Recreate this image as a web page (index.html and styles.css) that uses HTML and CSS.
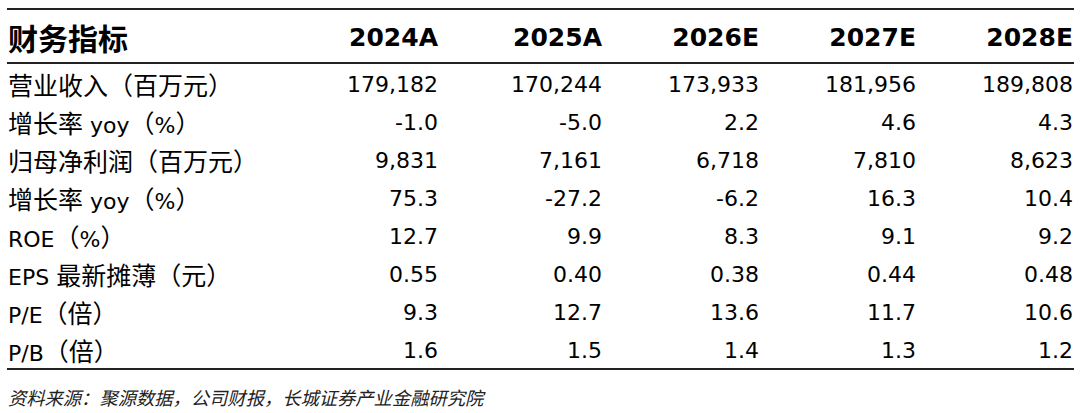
FILE: index.html
```html
<!DOCTYPE html>
<html lang="zh-CN">
<head>
<meta charset="utf-8">
<title>财务指标</title>
<link rel="stylesheet" href="styles.css">
</head>
<body>
<table class="fin">
  <colgroup>
    <col class="c-label">
    <col class="c1">
    <col class="c2">
    <col class="c3">
    <col class="c4">
    <col class="c5">
  </colgroup>
  <thead>
    <tr>
      <th class="label"><span class="cn">财务指标</span></th>
      <th>2024A</th>
      <th>2025A</th>
      <th>2026E</th>
      <th>2027E</th>
      <th>2028E</th>
    </tr>
  </thead>
  <tbody>
    <tr><td class="label"><span class="cn">营业收入（百万元）</span></td><td>179,182</td><td>170,244</td><td>173,933</td><td>181,956</td><td>189,808</td></tr>
    <tr><td class="label"><span class="cn">增长率</span> yoy<span class="cn">（</span>%<span class="cn">）</span></td><td>-1.0</td><td>-5.0</td><td>2.2</td><td>4.6</td><td>4.3</td></tr>
    <tr><td class="label"><span class="cn">归母净利润（百万元）</span></td><td>9,831</td><td>7,161</td><td>6,718</td><td>7,810</td><td>8,623</td></tr>
    <tr><td class="label"><span class="cn">增长率</span> yoy<span class="cn">（</span>%<span class="cn">）</span></td><td>75.3</td><td>-27.2</td><td>-6.2</td><td>16.3</td><td>10.4</td></tr>
    <tr><td class="label">ROE<span class="cn">（</span>%<span class="cn">）</span></td><td>12.7</td><td>9.9</td><td>8.3</td><td>9.1</td><td>9.2</td></tr>
    <tr><td class="label">EPS <span class="cn">最新摊薄（元）</span></td><td>0.55</td><td>0.40</td><td>0.38</td><td>0.44</td><td>0.48</td></tr>
    <tr><td class="label">P/E<span class="cn">（倍）</span></td><td>9.3</td><td>12.7</td><td>13.6</td><td>11.7</td><td>10.6</td></tr>
    <tr><td class="label">P/B<span class="cn">（倍）</span></td><td>1.6</td><td>1.5</td><td>1.4</td><td>1.3</td><td>1.2</td></tr>
  </tbody>
</table>
<p class="source">资料来源：聚源数据，公司财报，长城证券产业金融研究院</p>
</body>
</html>
```

FILE: styles.css
```css
html, body {
  margin: 0;
  padding: 0;
  background: #ffffff;
}

body {
  font-family: "DejaVu Sans", "Noto Sans CJK SC", sans-serif;
  color: #000000;
}

.fin {
  border-collapse: collapse;
  table-layout: fixed;
  width: 1067px;
  margin: 8px 0 0 7px;
}

.c-label { width: 270px; }
.c1 { width: 162px; }
.c2 { width: 164px; }
.c3 { width: 157px; }
.c4 { width: 157px; }
.c5 { width: 157px; }

.fin th,
.fin td {
  padding: 0 1px 0 0;
  text-align: right;
  vertical-align: middle;
  white-space: nowrap;
  line-height: 1;
}

.fin thead th {
  height: 49px;
  padding-top: 3px;
  font-size: 25px;
  font-weight: bold;
  border-top: 2px solid #222222;
  border-bottom: 2px solid #222222;
}

.fin tbody td {
  height: 34px;
  padding-top: 4px;
  font-size: 22px;
}

.fin tbody tr:last-child td {
  border-bottom: 2px solid #222222;
}

.fin .label {
  text-align: left;
  padding-left: 1px;
}

.cn {
  font-family: "Noto Sans CJK SC", sans-serif;
  font-size: 25px;
  line-height: 1;
}

.fin thead .cn {
  font-size: 30px;
}

.source {
  margin: 17px 0 0 8px;
  font-family: "Noto Sans CJK SC", sans-serif;
  font-size: 18.3px;
  font-style: italic;
  line-height: 1.2;
  color: #222222;
}
```
